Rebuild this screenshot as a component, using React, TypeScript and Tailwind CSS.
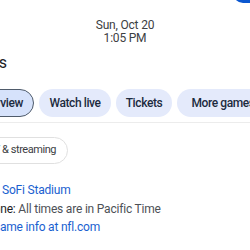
export default function App() {
  return (
    <div className="w-[250px] h-[250px] overflow-hidden bg-white font-['Roboto','Liberation_Sans',sans-serif]">
      {/* top-right action button, mostly scrolled off */}
      <div className="flex justify-end h-[3px]">
        <div className="shrink-0 w-[40px] h-[20px] -mt-[17px] -mr-[23px] rounded-full bg-[#0b57d0]" />
      </div>

      {/* Game time */}
      <div className="mt-[16px] text-center text-[12px] leading-[13px] tracking-[-0.2px] text-[#3c4043]">
        <div>Sun, Oct 20</div>
        <div>1:05 PM</div>
      </div>

      {/* Team name (left column cut off) */}
      <div className="mt-[8px] w-[7px] flex justify-end">
        <span className="shrink-0 whitespace-nowrap text-[16px] leading-[20px] text-[#202124]">Raiders</span>
      </div>

      {/* Tabs */}
      <div className="mt-[16px] flex items-center gap-[5px] h-[28px]">
        <div className="w-[34px] shrink-0 flex justify-end">
          <div className="shrink-0 h-[28px] px-[10px] flex items-center rounded-full border border-[#4f5b6b] bg-[#d6e2fb] text-[12px] font-medium tracking-[-0.4px] text-[#1c2b40] whitespace-nowrap">
            Overview
          </div>
        </div>
        <Chip label="Watch live" w="w-[72px]" />
        <Chip label="Tickets" w="w-[56px]" />
        <Chip label="More games" w="w-[92px]" />
      </div>

      <div className="mt-[5px] h-px bg-[#ececec]" />

      {/* Secondary chip */}
      <div className="mt-[14px] w-[68px] flex justify-end">
        <div className="shrink-0 h-[27px] px-[11px] flex items-center rounded-full border border-[#e0e0e0] text-[11px] tracking-[-0.45px] text-[#3c4043] whitespace-nowrap">
          TV &amp; streaming
        </div>
      </div>

      {/* Details */}
      <div className="mt-[17px] text-[12px] leading-[18.5px] tracking-[-0.2px] whitespace-nowrap">
        <div className="ml-[2px] text-[#1a5fd0]">SoFi Stadium</div>
        <div className="-ml-[41px]">
          <span className="text-[#202124]">Time zone: </span>
          <span className="text-[#4d5156]">All times are in Pacific Time</span>
        </div>
        <div className="-ml-[8px] text-[#1a5fd0]">Game info at nfl.com</div>
      </div>
    </div>
  );
}

function Chip({ label, w }: { label: string; w: string }) {
  return (
    <div
      className={`${w} shrink-0 h-[28px] flex items-center justify-center rounded-full bg-[#e4eafb] text-[12px] font-medium tracking-[-0.4px] text-[#1c2b40] whitespace-nowrap`}
    >
      {label}
    </div>
  );
}
